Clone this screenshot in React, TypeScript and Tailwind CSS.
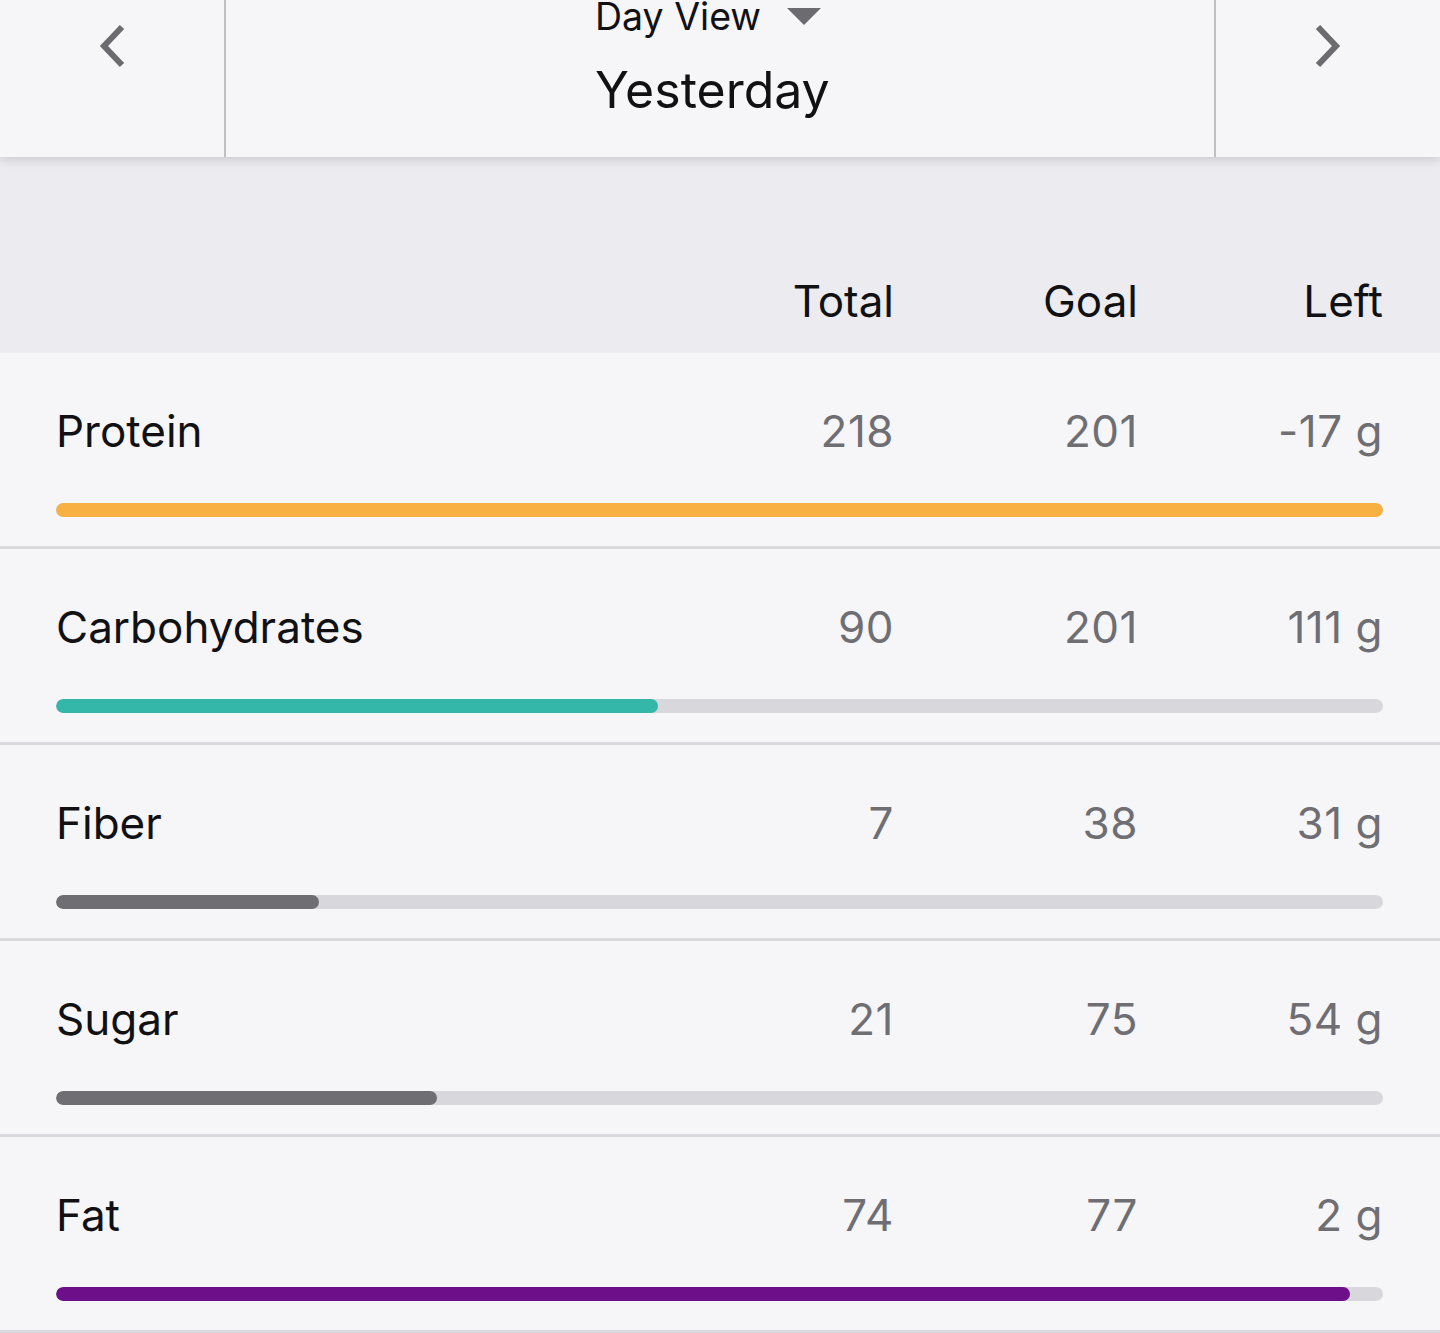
import React from 'react';

interface Nutrient {
  name: string;
  total: number;
  goal: number;
  left: number;
  pct: number; // bar fill, percent of track
  color: string;
}

const nutrients: Nutrient[] = [
  { name: 'Protein', total: 218, goal: 201, left: -17, pct: 100, color: 'bg-[#f8b043]' },
  { name: 'Carbohydrates', total: 90, goal: 201, left: 111, pct: 45.4, color: 'bg-[#34b6a9]' },
  { name: 'Fiber', total: 7, goal: 38, left: 31, pct: 19.8, color: 'bg-[#6e6e73]' },
  { name: 'Sugar', total: 21, goal: 75, left: 54, pct: 28.7, color: 'bg-[#6e6e73]' },
  { name: 'Fat', total: 74, goal: 77, left: 2, pct: 97.5, color: 'bg-[#6c0f89]' },
];

const Chevron = ({ dir }: { dir: 'left' | 'right' }) => (
  <svg width="30" height="46" viewBox="0 0 30 46" className="block">
    <polyline
      points={dir === 'left' ? '25,4 7,23 25,42' : '5,4 23,23 5,42'}
      fill="none"
      stroke="#6b6b70"
      strokeWidth="6"
    />
  </svg>
);

const NutrientRow = ({ n }: { n: Nutrient }) => (
  <div className="h-[196px] border-b-[3px] border-[#dadade] pt-[56px] pl-[56px] pr-[57px]">
    <div className="flex items-start text-[44px] leading-none">
      <div className="flex-1 text-[#111114]">{n.name}</div>
      <div className="w-[245px] text-right text-[#6e6e73] tracking-[0.5px]">{n.total}</div>
      <div className="w-[244px] text-right text-[#6e6e73] tracking-[0.5px]">{n.goal}</div>
      <div className="w-[245px] text-right text-[#6e6e73] tracking-[0.5px]">{n.left} g</div>
    </div>
    <div className="mt-[50px] h-[14px] rounded-full bg-[#d8d8dc] overflow-hidden">
      <div className={`h-full rounded-full ${n.color}`} style={{ width: `${n.pct}%` }} />
    </div>
  </div>
);

export default function App() {
  return (
    <div className="w-[1440px] h-[1333px] overflow-hidden bg-[#f6f6f9] font-['Inter',sans-serif]">
      {/* Top date switcher */}
      <div className="relative z-10 h-[157px] flex bg-[#f6f6f9] shadow-[0_3px_10px_rgba(0,0,0,0.14)]">
        <div className="w-[226px] flex justify-center pt-[23px] border-r-2 border-[#bfbfc4]">
          <Chevron dir="left" />
        </div>
        <div className="flex-1 pl-[369px]">
          <div className="flex items-start mt-[-2px]">
            <span className="text-[37.5px] leading-none text-[#111114]">Day View</span>
            <svg width="34" height="18" viewBox="0 0 34 18" className="ml-[26px] mt-[10px]">
              <polygon points="0,0 34,0 17,17" fill="#6b6b70" />
            </svg>
          </div>
          <div className="mt-[29px] text-[50px] leading-none text-[#111114]">Yesterday</div>
        </div>
        <div className="w-[226px] flex justify-center pt-[23px] border-l-2 border-[#bfbfc4]">
          <Chevron dir="right" />
        </div>
      </div>

      {/* Column headings */}
      <div className="h-[196px] bg-[#ececf0] flex items-end pb-[30px] pl-[56px] pr-[57px] text-[44px] leading-none text-[#111114]">
        <div className="flex-1" />
        <div className="w-[245px] text-right">Total</div>
        <div className="w-[244px] text-right">Goal</div>
        <div className="w-[245px] text-right">Left</div>
      </div>

      {nutrients.map((n) => (
        <NutrientRow key={n.name} n={n} />
      ))}
    </div>
  );
}
